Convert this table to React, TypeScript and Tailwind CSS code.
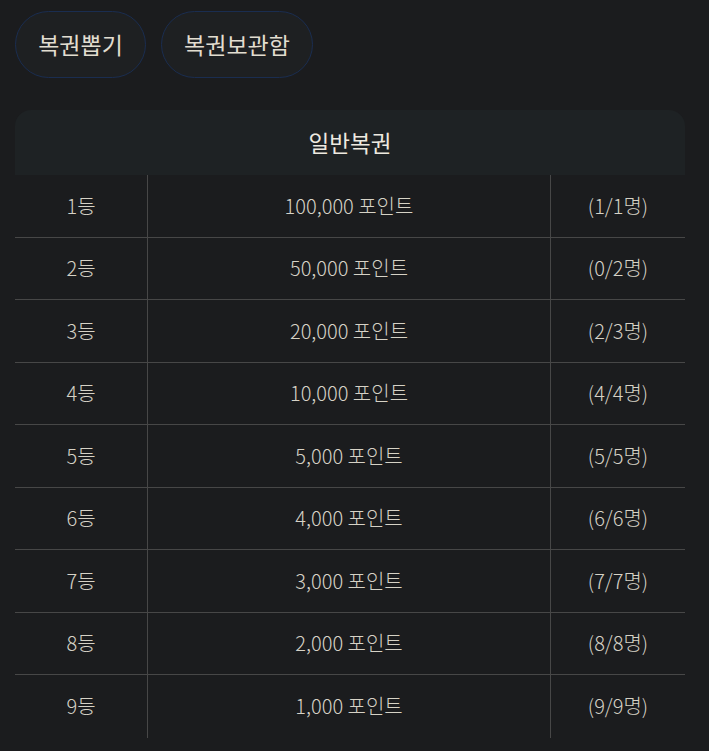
const prizes = [
  { rank: "1등", point: "100,000 포인트", count: "(1/1명)" },
  { rank: "2등", point: "50,000 포인트", count: "(0/2명)" },
  { rank: "3등", point: "20,000 포인트", count: "(2/3명)" },
  { rank: "4등", point: "10,000 포인트", count: "(4/4명)" },
  { rank: "5등", point: "5,000 포인트", count: "(5/5명)" },
  { rank: "6등", point: "4,000 포인트", count: "(6/6명)" },
  { rank: "7등", point: "3,000 포인트", count: "(7/7명)" },
  { rank: "8등", point: "2,000 포인트", count: "(8/8명)" },
  { rank: "9등", point: "1,000 포인트", count: "(9/9명)" },
]

const App = () => {
  return (
    <div
      className="min-h-[751px] bg-[#1b1c1e] text-[#d6d2c6] px-[15px] pt-[11px]"
      style={{ fontFamily: '"Noto Sans CJK KR", "Noto Sans", sans-serif' }}
    >
      <div className="flex gap-[15px]">
        <button className="h-[67px] w-[131px] rounded-full border border-[#1a2d50] bg-[#1e2022] text-[23px] text-[#e2ddd0]">
          복권뽑기
        </button>
        <button className="h-[67px] w-[152px] rounded-full border border-[#1a2d50] bg-[#1e2022] text-[23px] text-[#e2ddd0]">
          복권보관함
        </button>
      </div>
      <div className="mt-[32px] w-[670px]">
        <div className="h-[65px] rounded-t-[16px] bg-[#1e2224] flex items-center justify-center text-[22.5px] text-[#eeeae0]">
          일반복권
        </div>
        <div className="flex flex-col">
          {prizes.map((p, i) => (
            <div
              key={p.rank}
              className={
                i < prizes.length - 1
                  ? "flex h-[62.5px] border-b border-[#474747] text-[20px] font-light"
                  : "flex h-[62.5px] text-[20px] font-light"
              }
            >
              <div className="w-[133px] flex items-center justify-center border-r border-[#474747]">
                {p.rank}
              </div>
              <div className="w-[403px] flex items-center justify-center border-r border-[#474747]">
                {p.point}
              </div>
              <div className="flex-1 flex items-center justify-center">{p.count}</div>
            </div>
          ))}
        </div>
      </div>
    </div>
  )
}

export default App
